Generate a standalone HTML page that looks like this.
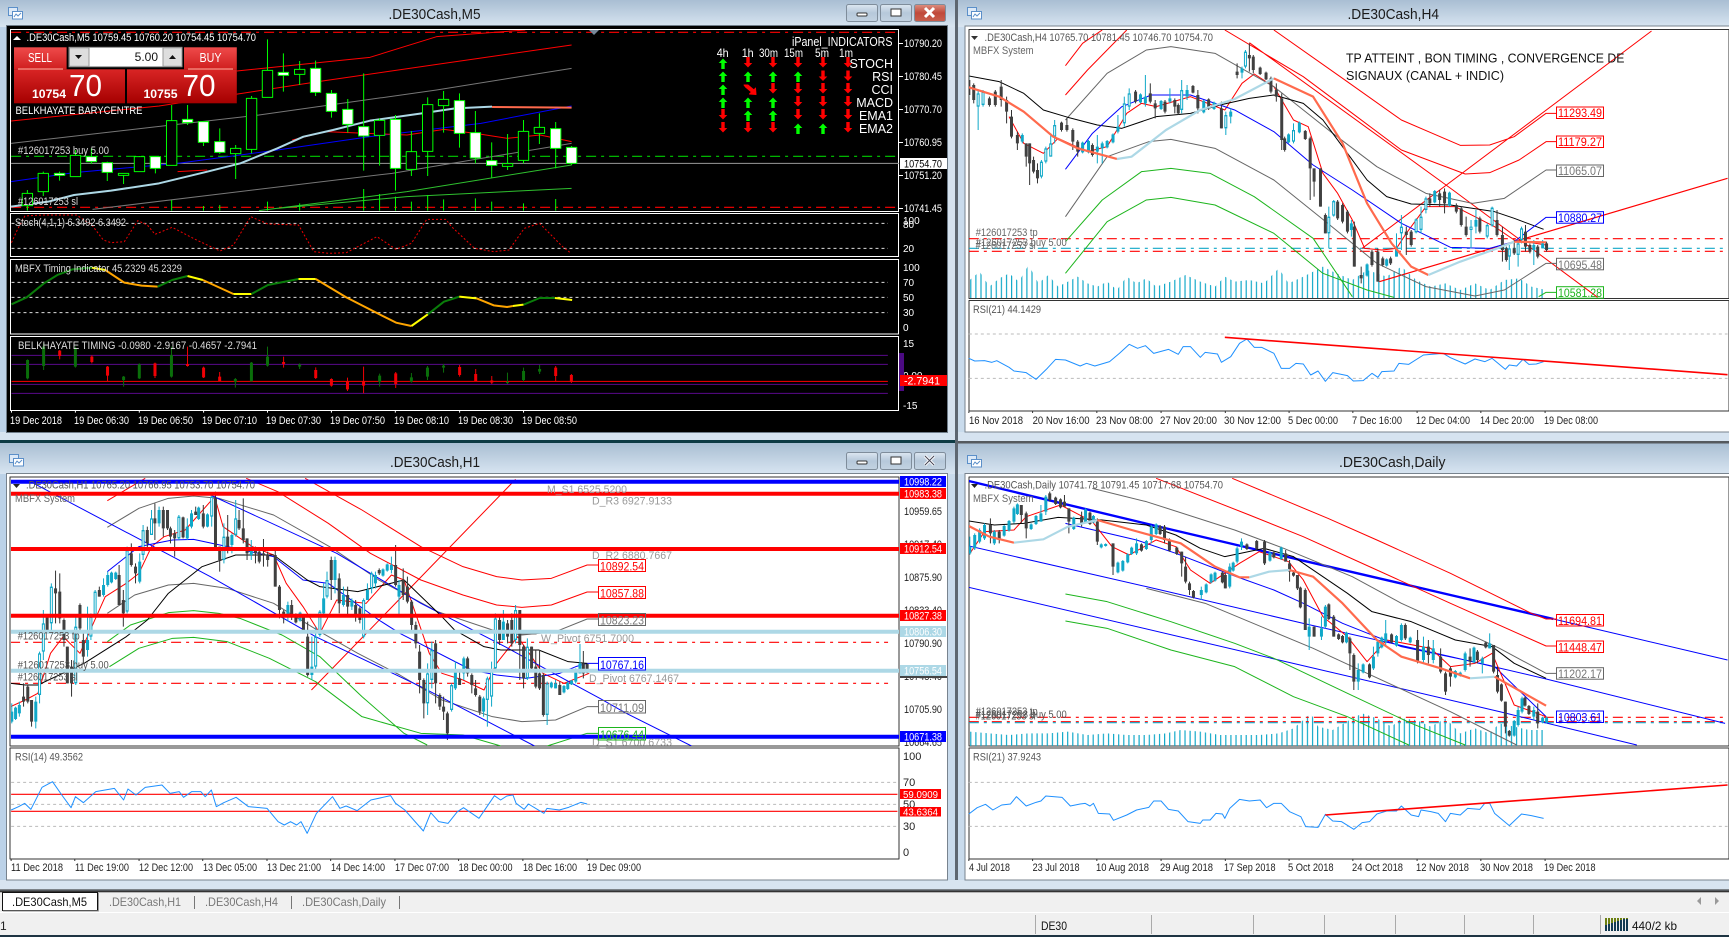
<!DOCTYPE html>
<html><head><meta charset="utf-8"><title>.DE30Cash charts</title>
<style>
html,body{margin:0;padding:0;background:#c9dbec;width:1729px;height:937px;overflow:hidden}
svg{display:block;font-family:"Liberation Sans",sans-serif;font-size:11px}
path,polyline,line,polygon{vector-effect:non-scaling-stroke;fill:none;stroke-linejoin:round}
.ax text{fill:#222}
</style></head><body>
<svg width="1729" height="937" viewBox="0 0 1729 937" xmlns="http://www.w3.org/2000/svg">
<defs>
<linearGradient id="tb" x1="0" y1="0" x2="0" y2="1"><stop offset="0" stop-color="#a9bed3"/><stop offset="1" stop-color="#d8e5f1"/></linearGradient>
<linearGradient id="btn" x1="0" y1="0" x2="0" y2="1"><stop offset="0" stop-color="#dde7f1"/><stop offset=".5" stop-color="#b6c8da"/><stop offset="1" stop-color="#c3d3e2"/></linearGradient>
<linearGradient id="cl" x1="0" y1="0" x2="0" y2="1"><stop offset="0" stop-color="#dd8f80"/><stop offset=".5" stop-color="#c0493a"/><stop offset="1" stop-color="#c9604e"/></linearGradient>
<linearGradient id="rt" x1="0" y1="0" x2="0" y2="1"><stop offset="0" stop-color="#ef4a4a"/><stop offset="1" stop-color="#cf1f1f"/></linearGradient>
<linearGradient id="rb" x1="0" y1="0" x2="0" y2="1"><stop offset="0" stop-color="#d92525"/><stop offset="1" stop-color="#a50000"/></linearGradient>
<pattern id="vol" patternUnits="userSpaceOnUse" width="10.4" height="100"><rect width="2.4" height="100" fill="#10a8c8"/></pattern>
<clipPath id="c1"><rect x="11" y="30" width="888" height="181"/></clipPath>
<clipPath id="c2"><rect x="969" y="30" width="760" height="268"/></clipPath>
<clipPath id="c3"><rect x="11" y="478" width="888" height="268"/></clipPath>
<clipPath id="c4"><rect x="969" y="478" width="760" height="268"/></clipPath>
<g id="ic"><rect x="0.5" y="0.5" width="9" height="8" fill="#dce9f7" stroke="#5b8fc9"/><rect x="4.5" y="4.5" width="10" height="7.5" fill="#fff" stroke="#5b8fc9"/><polyline points="6,10 8,7 10,9 13,6" stroke="#5b8fc9" style="fill:none"/></g>
<path id="ua" d="M0-5.5L4.3-1H1.7V5H-1.7V-1H-4.3Z" style="fill:#0f0;stroke:none"/>
<path id="da" d="M0 5.5L4.3 1H1.7V-5H-1.7V1H-4.3Z" style="fill:#f00;stroke:none"/>
</defs>

<!-- chrome -->
<rect width="1729" height="937" fill="#c9dbec"/>
<rect x="0" y="0" width="955" height="27" fill="url(#tb)"/>
<rect x="958" y="0" width="771" height="27" fill="url(#tb)"/>
<rect x="0" y="443" width="955" height="31" fill="url(#tb)"/>
<rect x="958" y="443" width="771" height="31" fill="url(#tb)"/>
<rect x="0" y="27" width="7" height="406" fill="#bcd2e8"/><rect x="947" y="27" width="8" height="406" fill="#d5e2ef"/>
<rect x="955" y="0" width="3" height="890" fill="#5d6670"/>
<rect x="0" y="432" width="955" height="8" fill="#d6e3f0"/>
<rect x="0" y="440" width="955" height="3" fill="#0d3a44"/>
<rect x="958" y="432" width="771" height="9" fill="#d6e3f0"/>
<rect x="958" y="441" width="771" height="2.5" fill="#55595e"/>
<rect x="0" y="474" width="7" height="406" fill="#bcd2e8"/>
<rect x="0" y="880" width="1729" height="10" fill="#d8e4f0"/>

<!-- M5 window -->
<rect x="6.5" y="25.5" width="941" height="407" fill="#000" stroke="#6f7d8a"/>
<g fill="none" stroke="#fff"><rect x="10.5" y="29.5" width="888" height="182"/><rect x="10.5" y="213.5" width="888" height="43"/><rect x="10.5" y="259.5" width="888" height="74.5"/><rect x="10.5" y="336.5" width="888" height="74"/></g>
<g clip-path="url(#c1)"><g transform="scale(.36996,.33333)">
<path d="M30 97H2430" stroke="#f00" stroke-width="1.2" stroke-dasharray="10 5 3 5"/>
<path d="M30 622H2430" stroke="#f00" stroke-width="1.2" stroke-dasharray="10 5 3 5"/>
<path d="M30 469H2430" stroke="#0c0" stroke-width="1.2" stroke-dasharray="10 5 3 5"/>
<path d="M30 490H2430" stroke="#999" stroke-width="1"/>
<path d="M640 213L1000 172L1180 110L1420 90M30 363L430 318L860 245L1200 190L1545 135" stroke="#f00" stroke-width="1"/>
<path d="M30 430L700 345L1180 270L1545 205M250 628L1060 520L1545 430" stroke="#777" stroke-width="1"/>
<path d="M700 632L1100 575L1545 495M750 625L1100 590L1545 565" stroke="#2fc02f" stroke-width="1"/>
<path d="M30 545L200 518L480 490L750 450L1000 410L1300 370L1545 318" stroke="#00f" stroke-width="1"/>
<path d="M480 515L560 510M790 420L880 395L1100 405L1200 388L1285 400L1372 415L1460 405L1545 425" stroke="#f00" stroke-width="1"/>
<polyline points="30,620 130,605 200,585 300,572 430,550 560,515 650,490 750,445 820,410 900,390 1000,362 1140,340 1230,325 1330,320" stroke="#add8e6" stroke-width="2"/>
<polyline points="1330,321 1545,323" stroke="#ff6a4d" stroke-width="2"/>
<path d="M74 632V600M464 632V600M550 632V618M594 632V615M723 632V605M810 632V610M983 632V567M1026 632V582M1069 632V590M1112 632V605M1156 632V585M1199 632V598M1285 632V595M1329 632V605M1415 632V610M1502 632V597" stroke="#0f0" stroke-width="1"/>
<path d="M74 570V630M117 515V588M161 515V542M204 450V530M247 445V492M290 485V543M334 520V552M377 468V515M420 470V520M464 315V496M507 315V375M550 365V438M594 385V462M637 435V537M680 288V460M723 118V292M766 160V275M810 183V255M853 182V288M896 270V353M940 297V398M983 220V512M1026 355V497M1069 345V572M1112 393V528M1156 292V528M1199 273V398M1242 280V443M1285 333V490M1329 427V533M1372 402V510M1415 360V490M1458 340V432M1502 366V505M1545 438V495" stroke="#0f0" stroke-width="1"/>
<path style="fill:#000" stroke="#0f0" stroke-width="1" d="M60 580h28v37h-28zM103 520h28v55h-28zM190 466h28v64h-28zM320 520h28v6h-28zM363 470h28v45h-28zM450 362h28v134h-28zM623 445h28v16h-28zM666 295h28v153h-28zM709 211h28v81h-28zM796 208h28v15h-28zM1012 361h28v45h-28zM1098 455h28v53h-28zM1142 314h28v140h-28zM1185 298h28v19h-28zM1358 491h28v8h-28zM1401 394h28v87h-28zM1444 382h28v18h-28z"/>
<path style="fill:#fff" stroke="#0f0" stroke-width="1" d="M147 520h28v6h-28zM233 470h28v15h-28zM276 488h28v29h-28zM406 470h28v35h-28zM493 358h28v10h-28zM536 365h28v62h-28zM580 425h28v32h-28zM752 217h28v9h-28zM839 205h28v72h-28zM882 280h28v54h-28zM926 328h28v45h-28zM969 380h28v28h-28zM1055 358h28v147h-28zM1228 302h28v98h-28zM1271 398h28v76h-28zM1315 482h28v14h-28zM1488 386h28v59h-28zM1531 442h28v48h-28z"/>
</g></g>
<path d="M594 35l-5-5h10z" style="fill:#778899;stroke:none"/>
<path d="M17 36l-4 4h8z" style="fill:#fff;stroke:none"/>
<text x="26.5" y="41" fill="#fff" textLength="229.5" lengthAdjust="spacingAndGlyphs">.DE30Cash,M5  10759.45 10760.20 10754.45 10754.70</text>

<!-- trade panel -->
<rect x="14" y="47.3" width="52.6" height="22" fill="url(#rt)"/><rect x="184" y="47.3" width="52.8" height="22" fill="url(#rt)"/>
<rect x="14" y="69.3" width="111" height="34" fill="url(#rb)"/><rect x="127" y="69.3" width="109.8" height="34" fill="url(#rb)"/>
<rect x="69" y="47.3" width="113" height="19.5" fill="#fff" stroke="#888"/><rect x="69.5" y="47.8" width="19.5" height="18.5" fill="#dedede" stroke="#999"/><rect x="163" y="47.8" width="19" height="18.5" fill="#dedede" stroke="#999"/>
<path d="M75 55h7l-3.5 4z" style="fill:#111;stroke:none"/><path d="M169 59h7l-3.5-4z" style="fill:#111;stroke:none"/>
<path d="M18 69H63M188 69H233" stroke="#ffb0a0"/>
<text x="28" y="62" fill="#fff" font-size="13" textLength="24" lengthAdjust="spacingAndGlyphs">SELL</text>
<text x="199.5" y="62" fill="#fff" font-size="13" textLength="22" lengthAdjust="spacingAndGlyphs">BUY</text>
<text x="158" y="61" fill="#111" font-size="12" text-anchor="end">5.00</text>
<text x="32" y="98" fill="#fff" font-size="12" font-weight="700" textLength="34" lengthAdjust="spacingAndGlyphs">10754</text>
<text x="69" y="96" fill="#fff" font-size="31" textLength="33" lengthAdjust="spacingAndGlyphs">70</text>
<text x="143.5" y="98" fill="#fff" font-size="12" font-weight="700" textLength="34" lengthAdjust="spacingAndGlyphs">10755</text>
<text x="182.5" y="96" fill="#fff" font-size="31" textLength="33" lengthAdjust="spacingAndGlyphs">70</text>
<text x="15.5" y="114" fill="#fff" textLength="127" lengthAdjust="spacingAndGlyphs">BELKHAYATE BARYCENTRE</text>
<text x="18" y="154" fill="#ddd" textLength="91" lengthAdjust="spacingAndGlyphs">#126017253 buy 5.00</text>
<text x="18" y="205" fill="#ddd" textLength="60" lengthAdjust="spacingAndGlyphs">#126017253 sl</text>

<!-- iPanel -->
<g fill="#fff">
<text x="792" y="46" font-size="12.5" textLength="100.5" lengthAdjust="spacingAndGlyphs">iPanel_INDICATORS</text>
<text x="716.7" y="57" font-size="12" textLength="12" lengthAdjust="spacingAndGlyphs">4h</text>
<text x="741.7" y="57" font-size="12" textLength="12" lengthAdjust="spacingAndGlyphs">1h</text>
<text x="759" y="57" font-size="12" textLength="19" lengthAdjust="spacingAndGlyphs">30m</text>
<text x="784" y="57" font-size="12" textLength="19" lengthAdjust="spacingAndGlyphs">15m</text>
<text x="815" y="57" font-size="12" textLength="14" lengthAdjust="spacingAndGlyphs">5m</text>
<text x="839" y="57" font-size="12" textLength="14" lengthAdjust="spacingAndGlyphs">1m</text>
<g font-size="12.5" text-anchor="end">
<text x="893" y="68">STOCH</text><text x="893" y="81">RSI</text><text x="893" y="94">CCI</text><text x="893" y="107">MACD</text><text x="893" y="120">EMA1</text><text x="893" y="133">EMA2</text>
</g></g>
<use href="#ua" x="723" y="64"/><use href="#da" x="748" y="62"/><use href="#da" x="773" y="62"/><use href="#da" x="798" y="62"/><use href="#da" x="823" y="62"/><use href="#da" x="848" y="62"/>
<use href="#ua" x="723" y="77"/><use href="#ua" x="748" y="77"/><use href="#ua" x="773" y="77"/><use href="#ua" x="798" y="77"/><use href="#da" x="823" y="75.5"/><use href="#da" x="848" y="75.5"/>
<use href="#ua" x="723" y="90"/><path d="M744 85h4l6 5 1.5-2 .5 6.5-6.5-.5 2-2-6-5z" style="fill:#f00;stroke:#f00"/><use href="#da" x="773" y="88"/><use href="#da" x="798" y="88"/><use href="#da" x="823" y="88"/><use href="#da" x="848" y="88"/>
<use href="#ua" x="723" y="103"/><use href="#ua" x="748" y="103"/><use href="#ua" x="773" y="103"/><use href="#da" x="798" y="101"/><use href="#da" x="823" y="101"/><use href="#da" x="848" y="101"/>
<use href="#da" x="723" y="114"/><use href="#ua" x="748" y="116"/><use href="#ua" x="773" y="116"/><use href="#da" x="798" y="114"/><use href="#da" x="823" y="114"/><use href="#da" x="848" y="114"/>
<use href="#da" x="723" y="127"/><use href="#da" x="748" y="127"/><use href="#da" x="773" y="127"/><use href="#ua" x="798" y="129"/><use href="#ua" x="823" y="129"/><use href="#da" x="848" y="127"/>

<!-- M5 axis -->
<g fill="#fff">
<text x="904" y="47" textLength="38" lengthAdjust="spacingAndGlyphs">10790.20</text>
<text x="904" y="80" textLength="38" lengthAdjust="spacingAndGlyphs">10780.45</text>
<text x="904" y="113" textLength="38" lengthAdjust="spacingAndGlyphs">10770.70</text>
<text x="904" y="146" textLength="38" lengthAdjust="spacingAndGlyphs">10760.95</text>
<text x="904" y="179" textLength="38" lengthAdjust="spacingAndGlyphs">10751.20</text>
<text x="904" y="212" textLength="38" lengthAdjust="spacingAndGlyphs">10741.45</text>
<g font-size="10"><text x="903" y="224">100</text><text x="903" y="228">80</text><text x="903" y="252">20</text>
<text x="903" y="271">100</text><text x="903" y="286">70</text><text x="903" y="301">50</text><text x="903" y="316">30</text><text x="903" y="331">0</text>
<text x="903" y="347">15</text><text x="903" y="379">0.00</text><text x="903" y="409">-15</text></g>
</g>
<path d="M899 43.5h4M899 76.5h4M899 109.5h4M899 142.5h4M899 175.5h4M899 208.5h4" stroke="#fff"/>
<rect x="900" y="158" width="47" height="11" fill="#fff"/><text x="904" y="167.5" fill="#000" textLength="38" lengthAdjust="spacingAndGlyphs">10754.70</text>
<rect x="899" y="353" width="5" height="38" fill="#4b0a82"/>
<rect x="900" y="375" width="47" height="11" fill="#f00"/><text x="904" y="384.5" fill="#fff" textLength="36" lengthAdjust="spacingAndGlyphs">-2.7941</text>

<!-- M5 sub panes -->
<g transform="translate(0,200) scale(.3827,.33333)">
<path d="M30 70H2320M30 145H2320" stroke="#ddd" stroke-dasharray="3 3"/>
<polyline stroke="#e00" stroke-dasharray="2 2" points="30,128 45,90 65,48 110,45 200,45 240,75 270,120 290,128 325,125 360,62 385,75 405,103 450,82 510,118 575,153 610,135 655,50 700,72 780,75 820,155 860,160 905,158 985,110 1035,148 1075,130 1115,58 1165,58 1180,80 1240,145 1290,155 1330,150 1370,85 1410,70 1470,140 1490,158"/>
<path d="M30 247H2320M30 292H2320M30 338H2320" stroke="#ddd" stroke-dasharray="3 3"/>
<g stroke-width="2">
<polyline stroke="#0a7d0a" points="30,313 70,292 115,250 150,225 190,208 240,203"/><polyline stroke="#ff0" points="240,203 275,210"/><polyline stroke="#ffa500" points="275,210 325,248 370,257 412,260"/><polyline stroke="#0a7d0a" points="412,260 450,240 490,228"/><polyline stroke="#ff0" points="490,228 530,240"/><polyline stroke="#ffa500" points="530,240 610,282"/><polyline stroke="#ff0" points="610,282 657,282"/><polyline stroke="#0a7d0a" points="657,282 700,255 780,237"/><polyline stroke="#ff0" points="780,237 825,237"/><polyline stroke="#ffa500" points="825,237 905,292 990,342 1035,368 1075,378"/><polyline stroke="#ff0" points="1075,378 1118,343"/><polyline stroke="#0a7d0a" points="1118,343 1160,305 1200,290"/><polyline stroke="#ff0" points="1200,290 1245,295"/><polyline stroke="#ffa500" points="1245,295 1290,316 1325,321 1340,318"/><polyline stroke="#ff0" points="1340,318 1368,314"/><polyline stroke="#0a7d0a" points="1368,314 1410,294 1450,294"/><polyline stroke="#ff0" points="1450,294 1495,300"/>
</g>
<path d="M30 466H2320M30 493H2320M30 553H2320M30 580H2320" stroke="#5a0a8a" stroke-width="1"/>
<path d="M30 544H2320" stroke="#f00" stroke-width="1"/>
<path stroke="#0a6e0a" d="M72 478V538M114 430V510M197 440V503M323 528V560M364 490V537M448 440V533M615 534V563M657 486V544M699 440V500M783 490V507M992 521V560M1075 519V548M1117 498V540M1159 492V518M1326 518V552M1368 503V544M1410 495V522"/>
<path stroke="#0a6e0a" stroke-width="3" d="M72 480V535M114 440V498M197 445V500M323 530V540M364 493V535M448 465V530M615 537V545M657 488V544M699 470V497M783 494V500M992 527V545M1075 532V545M1117 503V530M1159 497V503M1326 546V549M1368 513V540M1410 507V515"/>
<path stroke="#f00005" d="M156 450V478M240 466V490M281 498V544M405 488V534M490 440V500M532 500V534M574 516V544M741 470V503M825 502V537M866 535V560M908 533V573M950 500V580M1034 516V564M1201 495V530M1243 507V544M1285 528V552M1452 498V544M1493 522V549"/>
<path stroke="#f00005" stroke-width="3" d="M156 452V468M240 470V486M281 500V527M405 490V528M490 492V498M532 503V532M574 530V544M741 486V492M825 510V534M866 537V557M908 545V568M950 545V557M1034 520V552M1201 501V525M1243 522V544M1285 541V548M1452 503V528M1493 525V546"/>
<path stroke="#fff" d="M30 632v6M197 632v6M364 632v6M532 632v6M699 632v6M866 632v6M1033 632v6M1201 632v6M1368 632v6"/>
</g>
<g fill="#fff">
<text x="15" y="226" fill="#ddd" textLength="111" lengthAdjust="spacingAndGlyphs">Stoch(4,1,1) 6.3492 6.3492</text>
<text x="15" y="272" fill="#ddd" textLength="167" lengthAdjust="spacingAndGlyphs">MBFX Timing Indicator 45.2329 45.2329</text>
<text x="18" y="349" fill="#ddd" textLength="239" lengthAdjust="spacingAndGlyphs">BELKHAYATE TIMING  -0.0980 -2.9167 -0.4657 -2.7941</text>
<text x="10" y="424" textLength="52" lengthAdjust="spacingAndGlyphs">19 Dec 2018</text>
<text x="74" y="424" textLength="55" lengthAdjust="spacingAndGlyphs">19 Dec 06:30</text>
<text x="138" y="424" textLength="55" lengthAdjust="spacingAndGlyphs">19 Dec 06:50</text>
<text x="202" y="424" textLength="55" lengthAdjust="spacingAndGlyphs">19 Dec 07:10</text>
<text x="266" y="424" textLength="55" lengthAdjust="spacingAndGlyphs">19 Dec 07:30</text>
<text x="330" y="424" textLength="55" lengthAdjust="spacingAndGlyphs">19 Dec 07:50</text>
<text x="394" y="424" textLength="55" lengthAdjust="spacingAndGlyphs">19 Dec 08:10</text>
<text x="458" y="424" textLength="55" lengthAdjust="spacingAndGlyphs">19 Dec 08:30</text>
<text x="522" y="424" textLength="55" lengthAdjust="spacingAndGlyphs">19 Dec 08:50</text>
</g>

<!-- title bars -->
<g fill="#1b1b1b">
<text x="388.5" y="19" font-size="15" textLength="92" lengthAdjust="spacingAndGlyphs">.DE30Cash,M5</text>
<text x="390" y="467" font-size="15" textLength="90" lengthAdjust="spacingAndGlyphs">.DE30Cash,H1</text>
<text x="1347.5" y="19" font-size="15" textLength="91.5" lengthAdjust="spacingAndGlyphs">.DE30Cash,H4</text>
<text x="1339" y="467" font-size="15" textLength="106.5" lengthAdjust="spacingAndGlyphs">.DE30Cash,Daily</text>
</g>
<use href="#ic" x="8" y="7"/><use href="#ic" x="967" y="7"/><use href="#ic" x="9" y="454"/><use href="#ic" x="967" y="455"/>
<g stroke="#7f8d9b">
<rect x="846.5" y="4.5" width="31" height="17" rx="2" fill="url(#btn)"/><rect x="880.5" y="4.5" width="31" height="17" rx="2" fill="url(#btn)"/><rect x="914.5" y="4.5" width="31" height="17" rx="2" fill="url(#cl)"/>
<rect x="846.5" y="452.5" width="31" height="17" rx="2" fill="url(#btn)"/><rect x="880.5" y="452.5" width="31" height="17" rx="2" fill="url(#btn)"/><rect x="914.5" y="452.5" width="31" height="17" rx="2" fill="url(#btn)"/>
</g>
<g stroke="#333" fill="#fff" stroke-width="1">
<rect x="857" y="13" width="10" height="3" rx="1"/><rect x="891" y="9" width="10" height="7"/>
<rect x="857" y="461" width="10" height="3" rx="1"/><rect x="891" y="457" width="10" height="7"/>
</g>
<path d="M925 8l9 9M934 8l-9 9" stroke="#fff" stroke-width="3"/>
<path d="M925 456l9 9M934 456l-9 9" stroke="#fff" stroke-width="3"/>
<path d="M925 456l9 9M934 456l-9 9" stroke="#445" stroke-width="1"/>

<!-- H4 window -->
<rect x="965" y="26" width="770" height="406" fill="#fff" stroke="#78838e"/>
<path d="M969 29.5H1729V298.5H969ZM969 300.5H1729V411H969Z" stroke="#333" stroke-width="1"/>
<g clip-path="url(#c2)"><g transform="translate(960,0) scale(.49044,.33333)">
<polygon style="fill:url(#vol);stroke:none" points="20,895 20,840 40,815 60,860 80,835 100,820 120,845 140,795 160,850 180,825 200,860 220,845 240,830 260,850 280,860 300,845 320,870 340,830 360,850 380,835 400,860 430,845 460,825 490,845 520,860 540,830 560,845 590,840 620,850 650,805 670,850 700,830 740,800 760,815 800,840 830,810 870,830 900,800 930,840 960,860 990,850 1020,870 1050,850 1080,870 1110,840 1140,835 1165,860 1195,870 1195,895"/>
<path d="M18 716H1565M18 754H1565" stroke="#f00" stroke-width="1.2" stroke-dasharray="10 5 3 5"/>
<path d="M18 745H1565" stroke="#10a8c8" stroke-width="1.2" stroke-dasharray="10 5 3 5"/>
<path stroke="#f00" d="M215 197L250 130L290 90M215 285L260 210L340 90M640 90L780 235L900 360L1020 436L1080 435L1130 410L1195 340H1216M540 90L700 230L800 340L900 450L1030 522L1080 518L1140 480L1195 425H1216M590 128L1005 570L1300 892M820 745L1410 93M100 350L130 430L170 460L200 415L260 455L300 440L340 340L370 310L400 320L470 290L540 330L575 250L600 222L640 260L680 360L710 380L740 520L770 580L800 660L825 745L860 750L890 745L910 700L950 620L1010 620L1050 650L1090 680L1130 720L1195 735"/>
<path stroke="#f00" stroke-width="1.2" d="M855 845L1565 535"/>
<path stroke="#666" d="M215 360L300 220L380 150L430 140L520 160L640 260L760 400L850 500L950 580L1045 610L1110 595L1195 510H1216M215 650L300 470L385 425L430 418L520 445L640 540L750 670L850 790L950 860L1050 888L1110 870L1195 790H1216"/>
<path stroke="#1db51d" d="M215 725L290 600L370 515L430 505L510 520L600 590L720 715L800 890M215 820L300 665L380 600L430 592L520 615L640 700L740 820L830 870L885 892M1180 890L1195 877H1216"/>
<polyline stroke="#000" points="18,228 80,245 130,280 170,330 220,352 280,375 330,385 400,350 470,340 530,315 590,295 640,285 700,310 740,360 790,460 830,540 870,590 920,612 1000,615 1090,635 1130,655 1190,688"/>
<polyline stroke="#00f" points="215,508 270,400 330,320 390,285 470,285 560,330 640,395 720,495 800,570 900,670 1000,742 1080,745 1130,725 1195,652 1216,652"/>
<path stroke="#10a8c8" d="M18 225V290M37 270V390M47 270V320M127 400V430M166 480V535M175 440V490M185 400V470M193 360V430M250 425V460M262 420V460M280 405V490M290 425V490M300 420V445M312 400V430M322 345V400M335 290V380M345 265V330M368 280V310M378 225V320M410 300V330M428 265V310M452 240V340M463 255V300M497 300V340M518 305V330M542 335V405M552 325V370M575 200V235M582 150V205M670 400V430M680 370V430M692 365V400M752 620V745M762 600V650M798 660V710M830 790V830M870 775V800M890 700V770M900 645V750M930 655V700M940 620V700M950 590V640M968 570V610M998 575V620M1042 660V745M1052 630V700M1075 670V715M1085 620V680M1120 735V810M1138 720V800M1145 680V730M1170 720V795M1188 720V745"/>
<path stroke="#10a8c8" stroke-width="3" d="M37 280V320M47 275V315M127 405V425M166 485V530M175 445V485M185 430V470M193 375V410M250 428V457M262 423V457M280 440V455M290 430V445M300 423V442M312 403V427M322 380V395M335 310V370M345 280V320M368 283V307M378 290V310M410 303V327M428 295V305M452 270V330M463 270V290M497 303V337M518 308V327M542 345V385M552 335V350M575 205V218M582 155V200M670 403V427M680 390V425M692 368V397M752 650V700M762 603V647M798 670V690M830 793V827M870 778V797M890 740V770M900 680V700M930 658V697M940 650V690M950 595V630M968 573V607M998 578V617M1042 680V690M1052 660V680M1075 675V710M1085 623V677M1120 745V770M1138 730V765M1145 685V720M1170 735V750M1188 730V745"/>
<path stroke="#fff" stroke-width="1" d="M37 284V316M47 279V311M166 489V526M175 449V481M185 434V466M193 379V406M335 314V366M345 284V316M452 274V326M542 349V381M582 159V196M680 394V421M752 654V696M762 607V643M900 684V696M930 662V693M940 654V686M950 599V626M1042 683V687M1075 679V706M1085 627V673M1120 749V766M1138 734V761M1145 689V716"/>
<path stroke="#333" d="M18 225V290M28 250V310M60 290V320M72 270V320M84 240V320M95 290V370M105 330V415M117 395V450M135 430V500M142 430V555M150 470V520M158 490V550M207 365V395M218 355V395M230 385V450M240 420V470M270 430V470M358 270V310M388 250V310M398 300V355M418 300V340M438 295V340M445 310V345M475 255V280M485 270V340M507 295V330M533 305V385M565 190V235M590 130V215M598 165V220M612 200V225M624 215V240M634 230V280M645 250V305M656 280V450M662 410V455M704 390V420M714 410V600M722 505V590M735 505V620M745 640V700M770 600V660M780 610V670M790 630V700M804 665V800M818 800V850M840 750V800M852 745V845M862 770V800M878 770V795M910 680V765M920 690V740M958 580V620M978 570V620M988 565V640M1012 610V640M1022 620V680M1032 650V710M1060 650V700M1095 630V710M1106 680V785M1114 740V785M1130 720V765M1153 675V755M1162 730V760M1178 735V775M1196 725V755"/>
<path stroke="#404040" stroke-width="3" d="M18 240V285M28 255V300M60 295V315M72 275V315M84 260V300M95 300V335M105 350V410M117 405V430M135 430V470M142 430V490M150 480V515M158 510V535M207 368V390M218 375V390M230 390V425M240 425V455M270 435V465M358 275V305M388 280V305M398 310V325M418 305V335M438 300V320M445 315V340M475 258V278M485 285V325M507 298V325M533 325V385M565 215V225M590 165V175M598 170V210M612 203V222M624 218V238M634 235V275M645 270V290M656 295V420M662 415V450M704 393V417M714 415V505M722 505V545M735 505V620M745 645V700M770 605V655M780 615V665M790 635V695M804 680V800M818 825V835M840 755V795M852 755V845M862 775V795M878 775V790M910 695V705M920 695V735M958 595V610M978 580V600M988 575V610M1012 615V635M1022 625V675M1032 680V705M1060 655V695M1095 660V705M1106 705V750M1114 745V780M1130 745V760M1153 695V740M1162 735V755M1178 740V770M1196 730V750"/>
<polyline stroke="#ff6a4d" stroke-width="2.2" points="18,262 80,290 130,335 190,410 240,445 320,477"/>
<polyline stroke="#add8e6" stroke-width="2.2" points="320,477 350,470 420,390 490,330 560,297 640,235"/>
<polyline stroke="#ff6a4d" stroke-width="2.2" points="640,235 720,290 780,430 830,610 880,730 920,800 955,825"/>
<polyline stroke="#add8e6" stroke-width="2.2" points="955,825 1020,785 1090,748 1130,725"/>
<polyline stroke="#ff6a4d" stroke-width="2.2" points="1130,725 1195,727"/>
</g></g>
<g transform="translate(960,290) scale(.49044,.33333)">
<path d="M18 132H1565M18 265H1565" stroke="#bbb" stroke-dasharray="3 3"/>
<polyline stroke="#1e90ff" stroke-width="1" points="18,205 30,213 50,212 65,217 75,212 100,232 110,243 135,248 155,268 178,235 195,208 215,210 245,228 258,220 275,228 305,215 325,190 345,163 362,175 378,167 395,190 425,178 445,193 455,170 470,170 490,202 500,187 525,192 533,217 552,200 570,160 585,147 600,172 615,172 640,190 655,235 672,235 685,220 700,222 715,255 730,243 745,274 760,248 790,257 802,273 822,272 840,250 852,262 860,245 885,243 895,220 915,223 945,195 985,190 1000,203 1030,222 1050,207 1070,215 1085,205 1112,238 1120,225 1135,228 1148,208 1160,223 1175,222 1190,215"/>
<path stroke="#f00" stroke-width="1.6" d="M540 142L1565 254"/>
<path stroke="#333" d="M18 364v5M148 364v5M279 364v5M410 364v5M541 364v5M671 364v5M801 364v5M932 364v5M1062 364v5M1193 364v5"/>
</g>
<g fill="#555">
<path d="M971 36h7l-3.5 4z" style="fill:#333;stroke:none"/>
<text x="984.5" y="41" textLength="228.5" lengthAdjust="spacingAndGlyphs">.DE30Cash,H4  10765.70 10781.45 10746.70 10754.70</text>
<text x="973" y="54" fill="#666" textLength="60.5" lengthAdjust="spacingAndGlyphs">MBFX System</text>
<text x="975.7" y="236" fill="#666" textLength="62" lengthAdjust="spacingAndGlyphs">#126017253 tp</text>
<text x="975.7" y="246" fill="#666" textLength="91" lengthAdjust="spacingAndGlyphs">#126017253 buy 5.00</text>
<text x="975.7" y="249" fill="#666" textLength="60" lengthAdjust="spacingAndGlyphs">#126017253 sl</text>
<text x="973" y="313" textLength="68" lengthAdjust="spacingAndGlyphs">RSI(21) 44.1429</text>
</g>
<text x="1346" y="62.5" fill="#111" font-size="13" textLength="278.5" lengthAdjust="spacingAndGlyphs">TP ATTEINT , BON TIMING , CONVERGENCE DE</text>
<text x="1346" y="80" fill="#111" font-size="13" textLength="158" lengthAdjust="spacingAndGlyphs">SIGNAUX (CANAL + INDIC)</text>
<g stroke-width="1" fill="none">
<rect x="1556.5" y="107" width="47" height="11.5" stroke="#f00"/><rect x="1556.5" y="136" width="47" height="11.5" stroke="#f00"/><rect x="1556.5" y="165" width="47" height="11.5" stroke="#666"/><rect x="1556.5" y="211.7" width="47" height="11.5" stroke="#00f"/><rect x="1556.5" y="258.3" width="47" height="11.5" stroke="#666"/><rect x="1556.5" y="286.7" width="47" height="11.5" stroke="#1db51d"/>
</g>
<g font-size="12">
<text x="1558" y="117" fill="#f00" textLength="44" lengthAdjust="spacingAndGlyphs">11293.49</text>
<text x="1558" y="146" fill="#f00" textLength="44" lengthAdjust="spacingAndGlyphs">11179.27</text>
<text x="1558" y="175" fill="#777" textLength="44" lengthAdjust="spacingAndGlyphs">11065.07</text>
<text x="1558" y="222" fill="#00f" textLength="44" lengthAdjust="spacingAndGlyphs">10880.27</text>
<text x="1558" y="269" fill="#777" textLength="44" lengthAdjust="spacingAndGlyphs">10695.48</text>
<text x="1558" y="297" fill="#1db51d" textLength="44" lengthAdjust="spacingAndGlyphs">10581.28</text>
</g>
<g class="ax">
<text x="969" y="424" textLength="54" lengthAdjust="spacingAndGlyphs">16 Nov 2018</text>
<text x="1032.6" y="424" textLength="57" lengthAdjust="spacingAndGlyphs">20 Nov 16:00</text>
<text x="1096" y="424" textLength="57" lengthAdjust="spacingAndGlyphs">23 Nov 08:00</text>
<text x="1160" y="424" textLength="57" lengthAdjust="spacingAndGlyphs">27 Nov 20:00</text>
<text x="1224" y="424" textLength="57" lengthAdjust="spacingAndGlyphs">30 Nov 12:00</text>
<text x="1288" y="424" textLength="50" lengthAdjust="spacingAndGlyphs">5 Dec 00:00</text>
<text x="1352" y="424" textLength="50" lengthAdjust="spacingAndGlyphs">7 Dec 16:00</text>
<text x="1416" y="424" textLength="54" lengthAdjust="spacingAndGlyphs">12 Dec 04:00</text>
<text x="1480" y="424" textLength="54" lengthAdjust="spacingAndGlyphs">14 Dec 20:00</text>
<text x="1544" y="424" textLength="54" lengthAdjust="spacingAndGlyphs">19 Dec 08:00</text>
</g>

<!-- H1 window -->
<rect x="6.5" y="473.5" width="941" height="406.5" fill="#fff" stroke="#78838e"/>
<path d="M10 477H899V746H10ZM10 748H899V859H10Z" stroke="#333"/>
<g clip-path="url(#c3)"><g transform="translate(0,440) scale(.42088,.33333)">
<path stroke="#f00" stroke-width="1.2" stroke-dasharray="10 5 3 5" d="M24 607H2110M24 730H2110"/>
<path stroke="#777" d="M1235 582H1275"/>
<path stroke="#f00" d="M255 182L345 115M725 115L860 210L1000 320L1100 380L1180 410L1240 420L1310 415L1395 375H1422M585 115L660 155L780 250L880 340L1000 420L1100 465L1180 495L1240 502L1310 495L1395 456H1422M740 750L1225 118M25 800L60 780L90 760L120 640L150 590L190 640L250 470L300 430L330 400L360 320L390 290L440 270L510 170L530 260L600 320L650 345L680 430L720 500L760 580L800 480L870 490L930 405L960 420L990 530L1020 640L1050 700L1100 720L1150 750L1180 670L1230 590L1290 700L1340 730L1400 700"/>
<path stroke="#666" d="M255 262L330 205L400 175L460 168L520 175L650 225L790 325L900 420L1040 515L1170 570L1240 585L1320 575L1395 537H1422M255 520L320 465L400 435L460 430L540 445L650 490L760 575L850 640L950 705L1050 780L1170 830L1240 845L1320 840L1395 800H1422"/>
<path stroke="#1db51d" d="M255 605L310 555L400 518L460 512L520 520L570 535L670 585L760 650L860 770L960 880L1015 915M260 680L330 625L410 595L460 592L540 605L640 655L750 725L860 830L1000 880L1100 885L1190 918M1300 918L1395 880H1422"/>
<path stroke="#00f" d="M80 130L500 410L750 590L1000 740L1220 885L1270 918M500 165L800 340L1000 490L1200 620L1330 710L1425 775L1488 820L1643 918M255 395L330 320L410 300L460 298L560 325L650 350L720 420L780 430L900 540L950 580L1120 690L1180 705L1250 715L1330 700L1368 680L1395 670H1422"/>
<polyline stroke="#000" points="25,730 60,735 90,735 200,670 300,590 350,540 400,460 480,380 560,345 650,345 730,420 760,440 850,455 960,420 1050,530 1080,570 1150,620 1190,630 1280,630 1350,665 1395,670"/>
<path stroke="#10a8c8" d="M28 790V850M37 800V840M46 785V830M85 770V865M94 635V790M103 510V660M122 430V580M180 530V735M208 500V650M216 520V600M226 450V530M246 415V470M256 395V440M265 395V430M275 395V420M302 320V520M332 340V430M340 255V360M360 210V285M378 200V260M425 225V300M445 235V300M455 210V265M472 200V240M493 220V262M503 165V260M532 250V370M551 280V340M560 180V290M597 300V360M684 485V545M713 515V545M741 590V720M750 560V690M760 510V590M769 430V525M777 395V475M796 350V460M816 440V500M836 475V510M864 475V595M873 430V480M883 395V460M892 395V445M910 385V410M920 370V395M930 350V400M948 420V530M1016 670V825M1026 605V745M1073 730V815M1082 665V750M1102 650V720M1149 770V830M1158 710V860M1168 665V800M1177 520V690M1196 510V600M1225 495V610M1253 595V720M1300 725V855M1310 725V745M1320 720V745M1340 735V760M1349 725V750M1358 720V735M1368 685V730M1378 612V700"/>
<path stroke="#10a8c8" stroke-width="3" d="M28 815V845M37 803V837M46 795V820M85 785V845M94 640V765M103 550V635M122 440V550M180 560V730M208 600V630M216 530V590M226 455V525M246 435V465M256 405V435M265 398V427M275 398V417M302 330V515M332 365V425M340 270V345M360 235V285M378 210V250M425 230V295M445 260V295M455 220V260M472 203V237M493 223V260M503 170V230M532 290V360M551 285V315M560 235V285M597 320V345M684 495V525M713 518V542M741 680V705M750 590V680M760 515V585M769 475V520M777 420V470M796 360V420M816 465V495M836 480V500M864 480V590M873 450V480M883 400V445M892 405V430M910 388V407M920 373V392M930 375V390M948 435V470M1016 700V790M1026 630V720M1073 735V810M1082 695V745M1102 655V700M1149 775V815M1158 715V780M1168 690V770M1177 535V685M1196 545V600M1225 510V600M1253 620V715M1300 730V825M1310 728V742M1320 730V745M1340 738V757M1349 728V747M1358 722V733M1368 690V725M1378 670V700"/>
<path stroke="#fff" stroke-width="1" d="M94 644V761M103 554V631M122 444V546M180 564V726M216 534V586M226 459V521M302 334V511M340 274V341M360 239V281M425 234V291M503 174V226M532 294V356M560 239V281M750 594V676M760 519V581M777 424V466M864 484V586M883 404V441M1016 704V786M1026 634V716M1073 739V806M1158 719V776M1168 694V766M1177 539V681M1225 514V596M1253 624V711M1300 734V821"/>
<path stroke="#333" d="M56 730V800M66 735V790M75 780V860M112 525V580M132 392V550M142 400V550M152 535V620M160 620V730M170 660V770M190 490V570M198 580V670M236 440V470M283 375V495M293 450V560M312 310V380M322 370V430M350 260V325M368 190V300M388 200V290M398 210V270M405 260V310M415 270V350M435 230V295M465 200V225M483 195V265M512 155V330M522 320V395M541 225V340M568 210V270M578 175V310M587 295V360M607 320V370M616 330V370M626 297V380M636 335V380M654 330V440M664 435V535M674 510V550M693 480V540M703 520V550M721 530V580M731 545V710M787 350V480M806 400V520M826 440V525M845 480V545M855 500V550M901 385V405M940 315V440M958 385V480M968 410V490M978 480V580M988 545V625M997 615V760M1007 715V835M1035 600V790M1045 760V810M1054 770V840M1063 815V900M1092 690V735M1111 650V710M1121 700V760M1130 720V770M1140 765V825M1187 530V615M1206 540V610M1216 520V620M1235 510V720M1244 615V745M1263 620V690M1273 630V745M1282 630V750M1291 700V830M1330 725V765M1386 633V715M1395 670V700"/>
<path stroke="#404040" stroke-width="3" d="M56 770V785M66 740V785M75 780V845M112 530V575M132 445V460M142 455V535M152 540V600M160 620V730M170 680V730M190 495V565M198 600V650M236 450V470M283 405V495M293 480V520M312 340V375M322 380V400M350 270V310M368 235V250M388 210V265M398 210V265M405 265V290M415 280V295M435 232V292M465 215V225M483 220V260M512 175V325M522 320V360M541 290V320M568 240V265M578 265V300M587 295V340M607 325V340M616 335V365M626 340V345M636 345V360M654 345V440M664 440V510M674 515V530M693 495V530M703 523V547M721 530V575M731 590V705M787 360V420M806 415V490M826 465V500M845 495V525M855 505V540M901 390V400M940 375V435M958 420V465M968 440V485M978 485V555M988 555V610M997 635V720M1007 720V790M1035 610V730M1045 765V800M1054 800V815M1063 820V880M1092 715V735M1111 655V700M1121 705V735M1130 745V765M1140 770V815M1187 540V600M1206 550V590M1216 540V610M1235 510V615M1244 620V715M1263 620V685M1273 680V740M1282 700V745M1291 705V825M1330 735V765M1386 670V700M1395 672V698"/>
</g></g>
<g>
<path d="M11 481.7H899" stroke="#00f" stroke-width="4"/>
<path d="M11 493.7H899" stroke="#f00" stroke-width="4"/>
<path d="M11 549H899" stroke="#f00" stroke-width="4"/>
<path d="M11 615.7H899" stroke="#f00" stroke-width="4"/>
<path d="M11 631.7H899" stroke="#add8e6" stroke-width="4"/>
<path d="M11 670.7H899" stroke="#add8e6" stroke-width="4"/>
<path d="M11 736.7H899" stroke="#00f" stroke-width="4"/>
</g>
<g fill="#999">
<text x="547" y="493" textLength="80" lengthAdjust="spacingAndGlyphs">M_S1 6525.5200</text>
<text x="592" y="504.5" textLength="80" lengthAdjust="spacingAndGlyphs">D_R3 6927.9133</text>
<text x="592" y="559" textLength="80" lengthAdjust="spacingAndGlyphs">D_R2 6880.7667</text>
<text x="541" y="642" textLength="93" lengthAdjust="spacingAndGlyphs">W_Pivot 6751.7000</text>
<text x="589" y="682" textLength="90" lengthAdjust="spacingAndGlyphs">D_Pivot 6767.1467</text>
<text x="592" y="746" textLength="80" lengthAdjust="spacingAndGlyphs">D_S1 6700.6733</text>
</g>
<g fill="#fff" stroke-width="1">
<rect x="598.5" y="559.5" width="47" height="12" stroke="#f00"/><rect x="598.5" y="586.5" width="47" height="12" stroke="#f00"/><rect x="598.5" y="613.5" width="47" height="12" stroke="#666" fill="none"/><rect x="598.5" y="657.5" width="47" height="12.5" stroke="#00f"/><rect x="598.5" y="700.5" width="47" height="12.5" stroke="#666" fill="none"/><rect x="598.5" y="727.5" width="47" height="12.5" stroke="#1db51d" fill="none"/>
</g>
<g font-size="12">
<text x="600" y="570.5" fill="#f00" textLength="44" lengthAdjust="spacingAndGlyphs">10892.54</text>
<text x="600" y="597.5" fill="#f00" textLength="44" lengthAdjust="spacingAndGlyphs">10857.88</text>
<text x="600" y="624.5" fill="#777" textLength="44" lengthAdjust="spacingAndGlyphs">10823.23</text>
<text x="600" y="669" fill="#00f" textLength="44" lengthAdjust="spacingAndGlyphs">10767.16</text>
<text x="600" y="712" fill="#777" textLength="44" lengthAdjust="spacingAndGlyphs">10711.09</text>
<text x="600" y="739" fill="#1db51d" textLength="44" lengthAdjust="spacingAndGlyphs">10676.44</text>
</g>
<g fill="#555">
<path d="M13 484h7l-3.5 4z" style="fill:#222;stroke:none"/>
<text x="26" y="488.5" textLength="229" lengthAdjust="spacingAndGlyphs">.DE30Cash,H1  10765.20 10766.95 10753.70 10754.70</text>
<text x="15" y="502" fill="#666" textLength="60" lengthAdjust="spacingAndGlyphs">MBFX System</text>
<text x="17.7" y="639.5" textLength="62" lengthAdjust="spacingAndGlyphs">#126017253 tp</text>
<text x="17.7" y="668.5" textLength="91" lengthAdjust="spacingAndGlyphs">#126017253 buy 5.00</text>
<text x="17.7" y="680.5" textLength="60" lengthAdjust="spacingAndGlyphs">#126017253 sl</text>
<text x="15" y="760.5" textLength="68" lengthAdjust="spacingAndGlyphs">RSI(14) 49.3562</text>
</g>
<g class="ax">
<text x="904" y="515" textLength="38" lengthAdjust="spacingAndGlyphs">10959.65</text>
<text x="904" y="548" textLength="38" lengthAdjust="spacingAndGlyphs">10917.40</text>
<text x="904" y="581" textLength="38" lengthAdjust="spacingAndGlyphs">10875.90</text>
<text x="904" y="614" textLength="38" lengthAdjust="spacingAndGlyphs">10833.40</text>
<text x="904" y="647" textLength="38" lengthAdjust="spacingAndGlyphs">10790.90</text>
<text x="904" y="680" textLength="38" lengthAdjust="spacingAndGlyphs">10748.40</text>
<text x="904" y="713" textLength="38" lengthAdjust="spacingAndGlyphs">10705.90</text>
<text x="904" y="746" textLength="38" lengthAdjust="spacingAndGlyphs">10664.65</text>
<text x="903" y="760">100</text><text x="903" y="786">70</text><text x="903" y="808">50</text><text x="903" y="830">30</text><text x="903" y="856">0</text>
</g>
<rect x="900" y="676" width="47" height="2" fill="#444"/>
<g>
<rect x="900" y="476" width="46" height="11" fill="#00f"/><text x="904" y="485.5" fill="#fff" textLength="38" lengthAdjust="spacingAndGlyphs">10998.22</text>
<rect x="900" y="488" width="46" height="11" fill="#f00"/><text x="904" y="497.5" fill="#fff" textLength="38" lengthAdjust="spacingAndGlyphs">10983.38</text>
<rect x="900" y="543" width="46" height="11" fill="#f00"/><text x="904" y="552.5" fill="#fff" textLength="38" lengthAdjust="spacingAndGlyphs">10912.54</text>
<rect x="900" y="610" width="46" height="11" fill="#f00"/><text x="904" y="619.5" fill="#fff" textLength="38" lengthAdjust="spacingAndGlyphs">10827.38</text>
<rect x="900" y="626" width="46" height="11" fill="#add8e6"/><text x="904" y="635.5" fill="#fff" textLength="38" lengthAdjust="spacingAndGlyphs">10806.30</text>
<rect x="900" y="665" width="46" height="11" fill="#add8e6"/><text x="904" y="674.5" fill="#fff" textLength="38" lengthAdjust="spacingAndGlyphs">10756.54</text>
<rect x="900" y="731" width="46" height="11" fill="#00f"/><text x="904" y="740.5" fill="#fff" textLength="38" lengthAdjust="spacingAndGlyphs">10671.38</text>
<rect x="900" y="789" width="41" height="10" fill="#f00"/><text x="903" y="798" fill="#fff" font-size="10" textLength="35" lengthAdjust="spacingAndGlyphs">59.0909</text>
<rect x="900" y="807" width="41" height="9.5" fill="#f00"/><text x="903" y="815.5" fill="#fff" font-size="10" textLength="35" lengthAdjust="spacingAndGlyphs">43.6364</text>
</g>
<g transform="translate(0,740) scale(.61805,.33333)">
<path d="M18 127H1452M18 193H1452M18 259H1452" stroke="#bbb" stroke-dasharray="3 3"/>
<path d="M18 163H1452M18 214H1452" stroke="#f00" stroke-width="1.2"/>
<polyline stroke="#1e90ff" stroke-width="1" points="18,210 30,200 40,190 50,208 68,142 85,125 100,165 115,203 122,170 135,188 155,155 185,145 200,180 207,147 220,165 235,142 262,135 275,160 290,155 297,172 310,155 325,155 332,170 342,150 350,200 362,188 382,172 402,200 432,205 450,245 460,255 470,245 480,255 487,245 497,280 512,220 538,170 550,205 560,198 578,212 600,180 632,167 640,190 655,210 685,273 697,218 710,245 725,250 740,215 750,203 775,235 800,167 810,180 820,168 830,165 835,190 848,208 855,192 880,220 885,205 905,210 920,202 940,187 950,192"/>
<path stroke="#333" d="M18 357v6M121 357v6M225 357v6M328 357v6M432 357v6M535 357v6M639 357v6M742 357v6M846 357v6M950 357v6"/>
</g>
<g class="ax">
<text x="11" y="871" textLength="52" lengthAdjust="spacingAndGlyphs">11 Dec 2018</text>
<text x="75" y="871" textLength="54" lengthAdjust="spacingAndGlyphs">11 Dec 19:00</text>
<text x="139" y="871" textLength="54" lengthAdjust="spacingAndGlyphs">12 Dec 12:00</text>
<text x="203" y="871" textLength="54" lengthAdjust="spacingAndGlyphs">13 Dec 05:00</text>
<text x="267" y="871" textLength="54" lengthAdjust="spacingAndGlyphs">13 Dec 21:00</text>
<text x="331" y="871" textLength="54" lengthAdjust="spacingAndGlyphs">14 Dec 14:00</text>
<text x="395" y="871" textLength="54" lengthAdjust="spacingAndGlyphs">17 Dec 07:00</text>
<text x="458.6" y="871" textLength="54" lengthAdjust="spacingAndGlyphs">18 Dec 00:00</text>
<text x="523" y="871" textLength="54" lengthAdjust="spacingAndGlyphs">18 Dec 16:00</text>
<text x="587" y="871" textLength="54" lengthAdjust="spacingAndGlyphs">19 Dec 09:00</text>
</g>

<!-- Daily window -->
<rect x="965" y="473.5" width="770" height="406.5" fill="#fff" stroke="#78838e"/>
<path d="M969 477H1729V746H969ZM969 748H1729V859H969Z" stroke="#333"/>
<g clip-path="url(#c4)"><g transform="translate(960,440) scale(.49044,.33333)">
<polygon style="fill:url(#vol);stroke:none" points="20,918 20,875 60,880 100,885 140,880 180,880 220,875 260,885 300,880 340,885 380,885 420,880 450,870 490,875 530,885 570,885 610,885 650,880 680,865 700,840 715,820 730,860 760,870 800,835 820,820 850,835 880,860 900,835 930,840 960,860 990,835 1020,880 1050,865 1080,880 1100,850 1130,860 1160,870 1190,870 1195,918"/>
<path stroke="#f00" stroke-width="1.2" stroke-dasharray="10 5 3 5" d="M18 832H1565M18 845H1565"/>
<path stroke="#10a8c8" stroke-width="1.2" stroke-dasharray="10 5 3 5" d="M18 848H1565"/>
<path stroke="#00f" stroke-width="2.4" d="M18 123L400 258L700 362L1000 465L1210 537"/>
<path stroke="#00f" stroke-width="1" d="M1210 537L1565 660M18 318L380 440L700 550L1000 650L1190 715L1560 850M18 442L650 660L1100 815L1380 915M215 250L360 300L440 340L560 408L640 450L700 490L780 550L900 620L1030 660L1090 680L1195 830"/>
<path stroke="#f00" d="M555 115L750 235L850 300L1000 400L1165 520L1195 537H1216M400 115L590 225L700 290L850 390L1000 490L1195 618H1216M18 345L50 275L110 270L135 230L205 195L270 245L310 320L345 345L400 300L440 320L470 390L510 430L570 370L610 335L670 365L700 420L740 530L790 590L830 665L870 600L960 625L1000 680L1050 670L1085 640L1130 795L1195 830"/>
<path stroke="#666" d="M270 145L380 185L560 270L660 325L800 410L900 490L1020 570L1100 625L1195 700H1216M380 445L500 490L720 625L830 700L1000 815L1135 915"/>
<path stroke="#1db51d" d="M215 462L300 485L430 545L560 610L640 655L790 760L920 850L1030 915M215 543L300 565L430 630L560 680L680 770L790 830L915 915"/>
<polyline stroke="#000" points="18,243 70,255 130,250 200,232 290,240 380,255 440,285 490,325 540,350 620,325 680,350 740,410 790,460 840,515 920,545 1010,600 1085,620 1130,670 1195,715"/>
<path stroke="#10a8c8" d="M20 290V345M30 280V330M40 265V310M50 250V300M70 270V315M90 255V290M100 240V275M110 200V250M117 190V225M145 250V270M155 225V255M165 195V245M175 165V225M232 230V270M256 205V250M272 225V250M288 310V325M297 310V320M322 365V400M332 360V395M342 340V370M350 320V345M360 295V345M380 300V330M390 255V310M400 250V285M492 440V480M502 430V460M512 400V430M520 395V425M550 370V445M557 365V395M565 320V370M574 295V330M632 335V365M655 320V360M712 535V630M737 530V600M745 495V565M788 575V610M812 670V750M822 670V700M843 620V690M852 600V650M860 590V625M868 540V615M890 585V620M900 550V605M918 590V610M945 590V670M965 600V670M1010 690V715M1020 695V710M1030 635V695M1048 620V670M1065 650V700M1080 580V625M1130 840V890M1138 800V860M1146 770V820M1170 800V840M1188 830V850M1196 830V850"/>
<path stroke="#10a8c8" stroke-width="3" d="M20 320V340M30 285V325M40 270V305M50 255V295M70 275V310M90 258V287M100 243V272M110 205V245M117 193V222M145 253V267M155 228V252M165 220V245M175 170V215M232 233V267M256 208V247M272 228V247M288 313V322M297 312V318M322 368V397M332 363V392M342 343V367M350 323V342M360 310V340M380 303V327M390 260V300M400 253V282M492 450V465M502 433V457M512 403V427M520 398V422M550 380V440M557 368V392M565 325V365M574 305V320M632 338V362M655 323V357M712 560V590M737 565V590M745 500V560M788 578V607M812 690V725M822 673V697M843 650V685M852 605V640M860 593V622M868 580V605M890 588V617M900 555V600M918 593V607M945 620V660M965 625V660M1010 693V712M1020 698V707M1030 640V690M1048 623V667M1065 655V670M1080 610V625M1130 843V887M1138 810V855M1146 775V815M1170 810V830M1188 833V847M1196 833V847"/>
<path stroke="#333" d="M62 235V310M80 270V310M125 195V250M135 215V295M183 155V185M195 170V195M205 175V205M213 165V200M222 205V280M248 215V260M265 215V255M280 235V315M312 310V405M370 310V335M408 255V285M417 255V310M427 295V335M442 320V345M452 335V410M460 350V430M468 425V465M476 450V475M535 395V430M541 400V445M585 310V330M605 300V330M621 300V375M640 335V355M664 330V365M672 360V425M680 395V410M688 405V450M694 440V505M704 445V570M722 560V590M752 490V540M762 525V590M772 580V600M780 585V610M795 590V690M803 640V750M835 670V715M880 580V610M908 550V600M933 570V670M955 600V670M980 625V700M990 695V765M1000 680V740M1040 625V680M1055 630V670M1072 605V625M1088 615V700M1096 680V760M1104 730V785M1112 785V880M1120 870V890M1152 770V800M1160 795V825M1178 790V865"/>
<path stroke="#404040" stroke-width="3" d="M62 255V280M80 275V300M125 195V225M135 220V265M183 160V180M195 173V192M205 178V202M213 185V200M222 205V245M248 230V250M265 218V252M280 245V305M312 310V380M370 313V332M408 258V282M417 260V300M427 298V332M442 323V342M452 335V370M460 380V425M468 430V450M476 453V472M535 398V427M541 405V445M585 313V327M605 303V327M621 305V370M640 338V352M664 340V365M672 370V395M680 398V407M688 405V445M694 443V502M704 450V570M722 560V590M752 493V537M762 530V590M772 583V597M780 588V607M795 595V640M803 645V725M835 673V712M880 583V607M908 555V595M933 600V665M955 620V645M980 650V695M990 700V755M1000 685V710M1040 650V665M1055 635V660M1072 608V622M1088 615V695M1096 705V755M1104 733V782M1112 785V860M1120 873V887M1152 773V797M1160 798V822M1178 815V850"/>
<polyline stroke="#ff6a4d" stroke-width="2.2" points="18,258 60,290 110,308"/>
<polyline stroke="#add8e6" stroke-width="2.2" points="110,308 170,298 220,260 280,240"/>
<polyline stroke="#ff6a4d" stroke-width="2.2" points="280,240 350,270 450,310 520,380 570,412 590,412"/>
<polyline stroke="#add8e6" stroke-width="2.2" points="590,412 630,395 672,390"/>
<polyline stroke="#ff6a4d" stroke-width="2.2" points="672,390 720,410 780,490 850,600 900,650 980,685 1040,715"/>
<polyline stroke="#add8e6" stroke-width="2.2" points="1040,715 1090,710"/>
<polyline stroke="#ff6a4d" stroke-width="2.2" points="1090,710 1195,797"/>
</g></g>
<g transform="translate(960,740) scale(.49044,.33333)">
<path d="M18 127H1565M18 259H1565" stroke="#bbb" stroke-dasharray="3 3"/>
<polyline stroke="#1e90ff" stroke-width="1" points="18,222 35,203 52,193 67,210 85,195 103,192 115,170 135,198 155,187 165,183 175,168 208,172 225,198 245,192 255,190 265,198 272,190 282,220 305,222 313,241 340,225 360,210 385,202 395,183 410,183 425,208 445,213 465,245 490,250 495,240 510,240 522,220 535,222 540,235 550,205 570,178 590,183 612,180 625,203 640,190 655,190 672,215 695,230 705,260 730,262 745,223 760,243 778,245 803,268 820,248 835,245 850,222 870,213 890,213 900,198 920,225 935,230 940,210 960,215 975,220 990,245 1000,220 1020,225 1035,205 1060,208 1070,190 1080,190 1090,220 1120,257 1145,222 1165,227 1190,235"/>
<path stroke="#f00" stroke-width="1.6" d="M745 225L1565 135"/>
<path stroke="#333" d="M18 357v6M148 357v6M279 357v6M410 357v6M541 357v6M671 357v6M801 357v6M932 357v6M1062 357v6M1193 357v6"/>
</g>
<g fill="#555">
<path d="M971 484h7l-3.5 4z" style="fill:#222;stroke:none"/>
<text x="984.5" y="488.5" textLength="238.5" lengthAdjust="spacingAndGlyphs">.DE30Cash,Daily  10741.78 10791.45 10717.68 10754.70</text>
<text x="973" y="502" fill="#666" textLength="60.5" lengthAdjust="spacingAndGlyphs">MBFX System</text>
<text x="975.7" y="715" textLength="62" lengthAdjust="spacingAndGlyphs">#126017253 tp</text>
<text x="975.7" y="718" textLength="91" lengthAdjust="spacingAndGlyphs">#126017253 buy 5.00</text>
<text x="975.7" y="719.5" textLength="60" lengthAdjust="spacingAndGlyphs">#126017253 sl</text>
<text x="973" y="760.5" textLength="68" lengthAdjust="spacingAndGlyphs">RSI(21) 37.9243</text>
</g>
<g fill="none" stroke-width="1">
<rect x="1556.5" y="614.5" width="47" height="11.5" stroke="#f00"/><rect x="1556.5" y="641" width="47" height="11.5" stroke="#f00"/><rect x="1556.5" y="667.7" width="47" height="11.5" stroke="#666"/><rect x="1556.5" y="711" width="47" height="11.5" stroke="#00f"/>
</g>
<g font-size="12">
<text x="1558" y="625" fill="#f00" textLength="44" lengthAdjust="spacingAndGlyphs">11694.81</text>
<text x="1558" y="651.5" fill="#f00" textLength="44" lengthAdjust="spacingAndGlyphs">11448.47</text>
<text x="1558" y="678" fill="#777" textLength="44" lengthAdjust="spacingAndGlyphs">11202.17</text>
<text x="1558" y="721.5" fill="#00f" textLength="44" lengthAdjust="spacingAndGlyphs">10803.61</text>
</g>
<g class="ax">
<text x="969" y="871" textLength="41" lengthAdjust="spacingAndGlyphs">4 Jul 2018</text>
<text x="1032.6" y="871" textLength="47" lengthAdjust="spacingAndGlyphs">23 Jul 2018</text>
<text x="1096" y="871" textLength="53" lengthAdjust="spacingAndGlyphs">10 Aug 2018</text>
<text x="1160" y="871" textLength="53" lengthAdjust="spacingAndGlyphs">29 Aug 2018</text>
<text x="1224" y="871" textLength="51.5" lengthAdjust="spacingAndGlyphs">17 Sep 2018</text>
<text x="1288" y="871" textLength="45.6" lengthAdjust="spacingAndGlyphs">5 Oct 2018</text>
<text x="1352" y="871" textLength="51" lengthAdjust="spacingAndGlyphs">24 Oct 2018</text>
<text x="1416" y="871" textLength="53" lengthAdjust="spacingAndGlyphs">12 Nov 2018</text>
<text x="1480" y="871" textLength="53" lengthAdjust="spacingAndGlyphs">30 Nov 2018</text>
<text x="1544" y="871" textLength="51.5" lengthAdjust="spacingAndGlyphs">19 Dec 2018</text>
</g>

<!-- tabs & status -->
<rect x="0" y="889.5" width="1729" height="1.2" fill="#222"/>
<rect x="0" y="891" width="1729" height="21" fill="#f0f0f0"/>
<rect x="0" y="891" width="1729" height="1.3" fill="#333"/>
<rect x="0" y="912" width="1729" height="1" fill="#fff"/>
<rect x="0" y="913" width="1729" height="22" fill="#f0f0f0"/>
<rect x="0" y="935" width="1729" height="2" fill="#1e3442"/>
<rect x="2.5" y="892.5" width="95" height="18" fill="#fff" stroke="#111"/>
<path d="M98.5 893V911H3" stroke="#999"/>
<text x="12" y="906" fill="#111" font-size="12" textLength="75" lengthAdjust="spacingAndGlyphs">.DE30Cash,M5</text>
<text x="109" y="906" fill="#777" font-size="12" textLength="72" lengthAdjust="spacingAndGlyphs">.DE30Cash,H1</text>
<text x="205" y="906" fill="#777" font-size="12" textLength="73" lengthAdjust="spacingAndGlyphs">.DE30Cash,H4</text>
<text x="302" y="906" fill="#777" font-size="12" textLength="84" lengthAdjust="spacingAndGlyphs">.DE30Cash,Daily</text>
<path d="M194.5 896V909M291.5 896V909M399.5 896V909" stroke="#777"/>
<path d="M1701 897v8l-4-4zM1715 897v8l4-4z" style="fill:#999;stroke:none"/>
<text x="0" y="930" fill="#222" font-size="12">1</text>
<path d="M1035.5 915V934M1151.5 915V934M1253.5 915V934M1324.5 915V934M1395.5 915V934M1464.5 915V934M1533.5 915V934M1600.5 915V934" stroke="#aaa"/>
<text x="1041" y="930" fill="#111" font-size="12" textLength="26" lengthAdjust="spacingAndGlyphs">DE30</text>
<path stroke-width="2" stroke="#6b7f10" d="M1606 918V925M1609 918V924M1612 918V923M1615 918V922M1618 918V921M1621 918V920M1624 918V919M1627 918V919"/>
<path stroke-width="2" stroke="#123a52" d="M1606 925V931M1609 924V931M1612 923V931M1615 922V931M1618 921V931M1621 920V931M1624 919V931M1627 919V931"/>
<text x="1632" y="930" fill="#111" font-size="12" textLength="45" lengthAdjust="spacingAndGlyphs">440/2 kb</text>
</svg>
</body></html>
